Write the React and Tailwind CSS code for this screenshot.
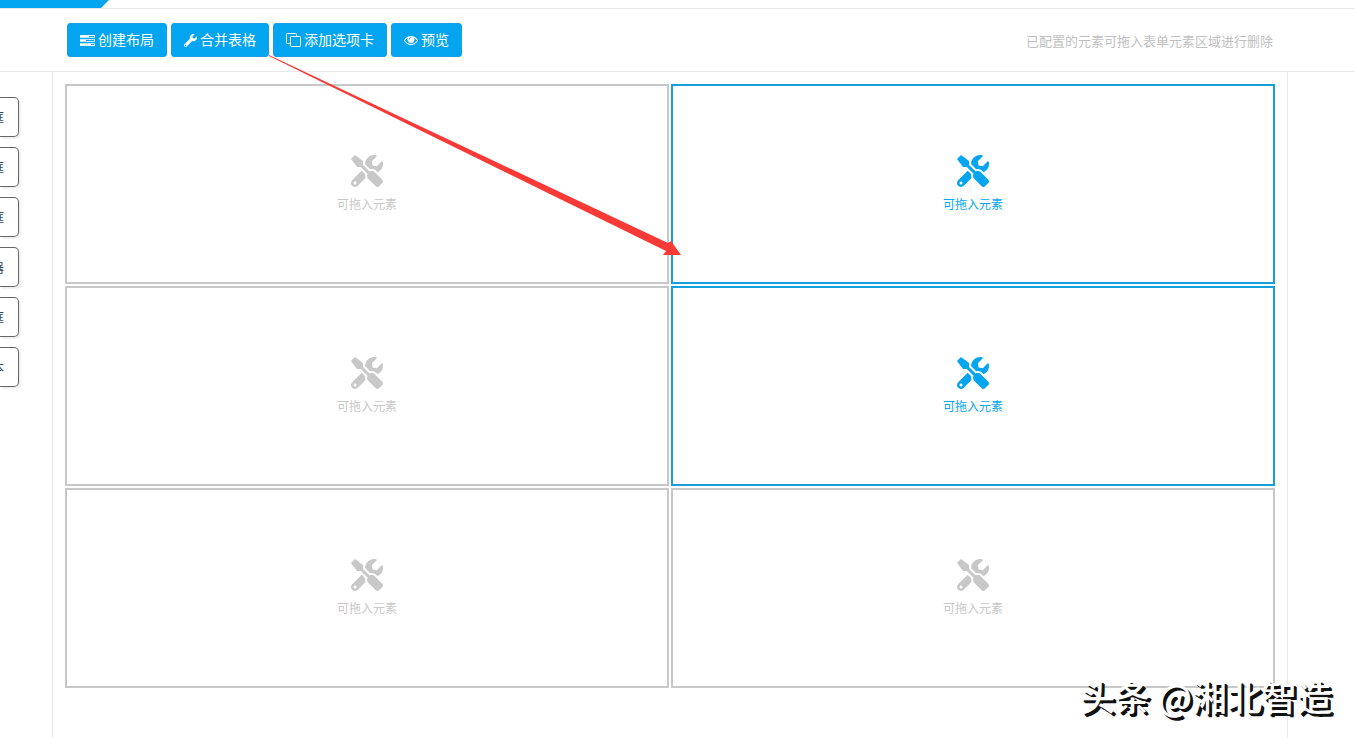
import { FaTools, FaWrench } from 'react-icons/fa';

const elements = [
  { id: 1, label: '框' },
  { id: 2, label: '框' },
  { id: 3, label: '框' },
  { id: 4, label: '器' },
  { id: 5, label: '框' },
  { id: 6, label: '本' },
];

const cells = [
  { id: 1, selected: false },
  { id: 2, selected: true },
  { id: 3, selected: false },
  { id: 4, selected: true },
  { id: 5, selected: false },
  { id: 6, selected: false },
];

function TasksIcon() {
  return (
    <svg viewBox="0 0 15 13" className="h-[13px] w-[15px]" fill="currentColor" aria-hidden="true">
      <path fillRule="evenodd" d="M0 1h15v3H0zM9 2v1h5V2zM0 5h15v3H0zM6 6v1h8V6zM0 9h15v3H0zM11 10v1h3v-1z" />
      <path d="M0 3.700h15v1.600H0zM0 7.700h15v1.600H0z" fill="#04a5f0" />
    </svg>
  );
}

function CloneIcon() {
  return (
    <svg viewBox="0 0 15 14" className="h-[14px] w-[15px]" fill="none" stroke="currentColor" aria-hidden="true">
      <rect x="4.5" y="3.5" width="10" height="10" rx="0.8" />
      <path d="M4.500 10.500H1.300a.8.8 0 0 1-.8-.8V1.300a.8.8 0 0 1 .8-.8h8.400a.8.8 0 0 1 .8.8v2.200" />
    </svg>
  );
}

function EyeIcon() {
  return (
    <svg viewBox="0 0 1792 1792" className="h-[14px] w-[14px]" fill="currentColor" aria-hidden="true">
      <path d="M1664 960q-152-236-381-353 61 104 61 225 0 185-131.500 316.500t-316.500 131.500-316.500-131.500-131.500-316.500q0-121 61-225-229 117-381 353 133 205 333.500 326.500t434.500 121.500 434.500-121.500 333.500-326.500zm-720-384q0-20-14-34t-34-14q-125 0-214.500 89.500t-89.500 214.500q0 20 14 34t34 14 34-14 14-34q0-86 61-147t147-61q20 0 34-14t14-34zm848 384q0 34-20 69-140 230-376.500 368.500t-499.500 138.500-499.500-139-376.500-368q-20-35-20-69t20-69q140-229 376.500-368t499.500-139 499.500 139 376.500 368q20 35 20 69z" />
    </svg>
  );
}

const actions = [
  { title: '创建布局', icon: <TasksIcon /> },
  { title: '合并表格', icon: <FaWrench className="h-[13px] w-[13px]" /> },
  { title: '添加选项卡', icon: <CloneIcon /> },
  { title: '预览', icon: <EyeIcon /> },
];

function Toolbar() {
  return (
    <header className="flex h-[63px] items-center justify-between border-b border-[#e8e8e8] pl-[67px] pr-[82px]">
      <div className="flex gap-1">
        {actions.map((action) => (
          <button
            key={action.title}
            type="button"
            className="flex h-[34px] items-center gap-[3px] rounded-[3px] border border-[#1c9fe0] bg-[#04a5f0] px-3 text-sm text-white"
          >
            {action.icon}
            <span className="pb-[2px]">{action.title}</span>
          </button>
        ))}
      </div>
      <p className="pt-[2px] text-[13px] text-[#bfbfbf]">已配置的元素可拖入表单元素区域进行删除</p>
    </header>
  );
}

function DropCell({ selected }) {
  return (
    <div
      className={`flex h-[200px] flex-col items-center justify-center gap-2 border-2 ${
        selected ? 'border-[#159fdc] text-[#04a5f0]' : 'border-[#c8c8c8] text-[#c8c8c8]'
      }`}
    >
      <FaTools className="h-8 w-8" />
      <span className="text-xs leading-[18px]">可拖入元素</span>
    </div>
  );
}

export default function App() {
  return (
    <div className="relative flex min-h-screen w-full flex-col overflow-hidden bg-white font-['Microsoft_YaHei','Noto_Sans_CJK_SC',sans-serif]">
      <div className="h-[9px] border-b border-[#e8e8e8]">
        <div className="h-2 w-[109px] bg-[#04a5f0] [clip-path:polygon(0_0,100%_0,101px_100%,0_100%)]" />
      </div>
      <Toolbar />

      <div className="flex flex-1">
        <aside className="flex w-[52px] flex-col gap-[10px] pt-[25px]">
          {elements.map((item) => (
            <button
              key={item.id}
              type="button"
              className="flex h-10 w-[19px] items-center justify-end rounded-r-[5px] border border-l-0 border-[#666] bg-white pr-[14px] text-[13px] text-[#34495e] shadow-[2px_2px_2px_#eee]"
            >
              <span>{item.label}</span>
            </button>
          ))}
        </aside>

        <main className="flex-1 border-x border-[#e8e8e8] p-3">
          <div className="grid grid-cols-2 gap-[2px]">
            {cells.map((cell) => (
              <DropCell key={cell.id} selected={cell.selected} />
            ))}
          </div>
        </main>
        <div className="w-[67px]" />
      </div>

      {/* arrow from the merge button to the selected cells */}
      <svg
        viewBox="0 0 412 202"
        className="pointer-events-none absolute left-[269px] top-[55px] h-[202px] w-[412px]"
        fill="#f93a37"
        aria-hidden="true"
      >
        <path d="M0 0L399 188L402 186L412 200L394 200L397 196L0 1z" />
      </svg>

      <p className="absolute bottom-[17px] right-[23px] whitespace-pre text-[35px] font-medium leading-[50px] text-white [text-shadow:2px_2px_0_#111,3px_3px_0_#111]">
        头条 @湘北智造
      </p>
    </div>
  );
}
